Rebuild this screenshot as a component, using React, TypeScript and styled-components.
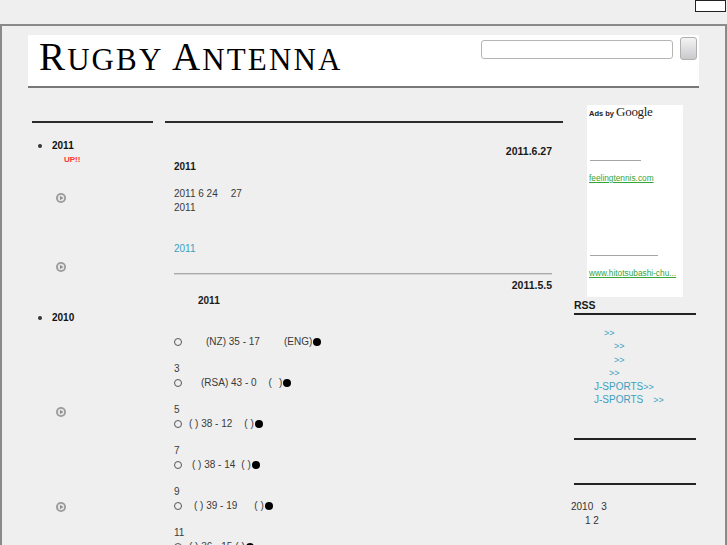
import React from 'react';
import styled, { createGlobalStyle } from 'styled-components';

const GlobalStyle = createGlobalStyle`
	html, body {
		margin: 0;
		padding: 0;
		background: #efefef;
		overflow: hidden;
	}
	body {
		font-family: "Liberation Sans", Arial, "Noto Sans CJK JP", sans-serif;
		font-size: 10px;
		color: #333;
	}
`;

const archive = [
	{ year: '2011', up: true, items: [28, 59] },
	{ year: '2010', up: false, items: [82, 85] },
];

const results = [
	{ no: '', pre: 24, home: '(NZ) 35 - 17', mid: 24, away: ['(ENG)'] },
	{ no: '3', pre: 19, home: '(RSA) 43 - 0', mid: 12, away: ['(', ')'], inner: 7 },
	{ no: '5', pre: 7, home: '( ) 38 - 12', mid: 12, away: ['( )'] },
	{ no: '7', pre: 10, home: '( ) 38 - 14', mid: 6, away: ['( )'] },
	{ no: '9', pre: 12, home: '( ) 39 - 19', mid: 17, away: ['( )'] },
	{ no: '11', pre: 7, home: '( ) 36 - 15', mid: 3, away: ['( )'] },
];

const rssLinks = [
	{ pad: 10, label: '' },
	{ pad: 20, label: '' },
	{ pad: 20, label: '' },
	{ pad: 15, label: '' },
	{ pad: 0, label: 'J-SPORTS' },
	{ pad: 0, label: 'J-SPORTS', tail: 10 },
];

export default function App(): JSX.Element {
	return (
		<>
			<GlobalStyle />
			<Page.TopStrip>
				<Page.CornerBox />
			</Page.TopStrip>
			<Page.Frame>
				<Header.Bar>
					<Header.Title>
						<Header.Cap>R</Header.Cap>UGBY <Header.Cap>A</Header.Cap>NTENNA
					</Header.Title>
					<Header.Search>
						<Header.Input />
						<Header.Button />
					</Header.Search>
				</Header.Bar>

				<Page.Columns>
					<Side.Column>
						<Side.Rule />
						<Side.List>
							{archive.map((a) => (
								<Side.Year key={a.year}>
									<Side.YearLabel>{a.year}</Side.YearLabel>
									{a.up && <Side.Up>UP!!</Side.Up>}
									{a.items.map((gap, i) => (
										<Side.Item key={i} gap={gap}>
											<PlayIcon />
										</Side.Item>
									))}
								</Side.Year>
							))}
						</Side.List>
					</Side.Column>

					<Main.Column>
						<Side.Rule />
						<Main.Entry>
							<Main.Date>2011.6.27</Main.Date>
							<Main.Title>2011</Main.Title>
							<Main.Para>
								2011 6 24<Gap w={13} />27
								<br />
								2011
							</Main.Para>
							<Main.Para>
								<br />
								<Main.Link>2011</Main.Link>
							</Main.Para>
						</Main.Entry>
						<Main.Divider />
						<Main.Entry>
							<Main.Date tight>2011.5.5</Main.Date>
							<Main.Title>
								<Gap w={24} />
								2011
							</Main.Title>
							{results.map((r, i) => (
								<Main.Para key={i}>
									{r.no || '\u00a0'}
									<br />
									<Main.Ring />
									<Gap w={r.pre} />
									{r.home}
									<Gap w={r.mid} />
									{r.away[0]}
									{r.away[1] && (
										<>
											<Gap w={r.inner ?? 0} />
											{r.away[1]}
										</>
									)}
									<Main.Dot />
								</Main.Para>
							))}
						</Main.Entry>
					</Main.Column>

					<Right.Column>
						<Right.Ad>
							<Right.AdHead>
								Ads by <Right.Google>Google</Right.Google>
							</Right.AdHead>
							<Right.AdRule w={51} gap={40} />
							<Right.AdLink>feelingtennis.com</Right.AdLink>
							<Right.AdRule w={68} gap={72} />
							<Right.AdLink>www.hitotsubashi-chu...</Right.AdLink>
						</Right.Ad>
						<Right.Heading>RSS</Right.Heading>
						<Right.Rule />
						<Right.Links>
							{rssLinks.map((l, i) => (
								<Right.LinkRow key={i}>
									<Gap w={l.pad} />
									{l.label}
									{l.tail && <Gap w={l.tail} />}
									<Right.Arrow>&gt;&gt;</Right.Arrow>
								</Right.LinkRow>
							))}
						</Right.Links>
						<Right.Rule gap={32} />
						<Right.Rule gap={43} />
						<Right.Note>
							2010<Gap w={8} />3
							<br />
							<Gap w={14} />1 2
						</Right.Note>
					</Right.Column>
				</Page.Columns>
			</Page.Frame>
		</>
	);
}

function PlayIcon(): JSX.Element {
	return (
		<svg width="10" height="10" viewBox="0 0 10 10">
			<circle cx="5" cy="5" r="5" fill="#9a9a9a" />
			<circle cx="5" cy="5" r="3.2" fill="#e4e4e4" />
			<path d="M4 3 L7.2 5 L4 7 Z" fill="#8a8a8a" />
		</svg>
	);
}

const Gap = styled.span<{ w: number }>`
	display: inline-block;
	width: ${(p) => p.w}px;
	height: 1px;
`;

namespace Page {
	export const TopStrip = styled.div`
		display: flex;
		justify-content: flex-end;
		align-items: flex-start;
		height: 24px;
	`;

	export const CornerBox = styled.div`
		width: 29px;
		height: 10px;
		background: #fff;
		border: 1px solid #222;
		margin-right: 1px;
	`;

	export const Frame = styled.div`
		box-sizing: border-box;
		height: 521px;
		border-top: 2px solid #8a8a8a;
		border-left: 2px solid #8a8a8a;
		border-right: 2px solid #8a8a8a;
		padding: 9px 0 0 26px;
		overflow: hidden;
	`;

	export const Columns = styled.div`
		display: flex;
		align-items: flex-start;
		margin-top: 17px;
	`;
}

namespace Header {
	export const Bar = styled.header`
		display: flex;
		justify-content: space-between;
		align-items: flex-start;
		box-sizing: border-box;
		width: 671px;
		height: 53px;
		padding: 0 2px 0 11px;
		background: #fff;
		border-bottom: 2px solid #777;
	`;

	export const Title = styled.h1`
		margin: 5px 0 0;
		font-family: "Liberation Serif", "Times New Roman", serif;
		font-weight: normal;
		font-size: 31px;
		line-height: 34px;
		letter-spacing: 2.1px;
		color: #000;
		white-space: nowrap;
	`;

	export const Cap = styled.span`
		font-size: 39px;
	`;

	export const Search = styled.div`
		display: flex;
		align-items: flex-start;
		gap: 7px;
		margin-top: 2px;
	`;

	export const Input = styled.div`
		box-sizing: border-box;
		width: 192px;
		height: 19px;
		margin-top: 3px;
		border: 1px solid #b5b5b5;
		border-radius: 3px;
		background: #fff;
	`;

	export const Button = styled.div`
		box-sizing: border-box;
		width: 17px;
		height: 23px;
		border: 1px solid #b0b0b0;
		border-radius: 3px;
		background: linear-gradient(#f4f4f4, #c9c9cc);
	`;
}

namespace Side {
	export const Column = styled.aside`
		width: 121px;
		margin: 16px 0 0 4px;
	`;

	export const Rule = styled.div`
		height: 2px;
		background: #2b2b2b;
	`;

	export const List = styled.ul`
		margin: 15px 0 0;
		padding: 0 0 0 20px;
		list-style: disc;
		font-size: 10px;
		line-height: 14px;
	`;

	export const Year = styled.li`
		margin-bottom: 38px;
		&::marker {
			font-size: 12px;
		}
	`;

	export const YearLabel = styled.div`
		font-weight: bold;
		color: #111;
	`;

	export const Up = styled.div`
		margin: 2px 0 0 12px;
		font-size: 8px;
		line-height: 10px;
		font-weight: bold;
		color: #f33;
	`;

	export const Item = styled.div<{ gap: number }>`
		display: flex;
		height: 10px;
		align-items: center;
		margin: ${(p) => p.gap}px 0 0 4px;
		svg {
			display: block;
		}
	`;
}

namespace Main {
	export const Column = styled.main`
		width: 398px;
		margin: 16px 0 0 12px;
	`;

	export const Entry = styled.section`
		padding: 0 11px 0 9px;
		font-size: 10px;
		line-height: 14px;
	`;

	export const Date = styled.div<{ tight?: boolean }>`
		margin-top: ${(p) => (p.tight ? 3 : 21)}px;
		text-align: right;
		font-size: 10.5px;
		font-weight: bold;
		color: #1a1a1a;
	`;

	export const Title = styled.h2`
		margin: 2px 0 0;
		font-size: 10px;
		font-weight: bold;
		color: #1a1a1a;
	`;

	export const Para = styled.p`
		margin: 13px 0 0;
		min-height: 14px;
		color: #3a3a3a;
		white-space: nowrap;
	`;

	export const Link = styled.span`
		color: #3c9fbf;
	`;

	export const Divider = styled.div`
		height: 1px;
		margin: 17px 11px 0 9px;
		background: #a8a8a8;
		border-bottom: 1px solid #d4d4d4;
	`;

	export const Ring = styled.span`
		display: inline-block;
		box-sizing: border-box;
		width: 8px;
		height: 8px;
		border: 1px solid #555;
		border-radius: 50%;
		vertical-align: -1px;
	`;

	export const Dot = styled.span`
		display: inline-block;
		width: 8px;
		height: 8px;
		margin-left: 1px;
		border-radius: 50%;
		background: #000;
		vertical-align: -1px;
	`;
}

namespace Right {
	export const Column = styled.aside`
		width: 122px;
		margin-left: 11px;
		font-size: 10px;
		line-height: 13.4px;
	`;

	export const Ad = styled.div`
		box-sizing: border-box;
		width: 96px;
		height: 192px;
		margin-left: 13px;
		padding: 1px 0 0 2px;
		background: #fff;
	`;

	export const AdHead = styled.div`
		font-size: 7.5px;
		line-height: 12px;
		font-weight: bold;
		color: #222;
		white-space: nowrap;
	`;

	export const Google = styled.span`
		font-family: "Liberation Serif", "Times New Roman", serif;
		font-size: 13px;
		font-weight: normal;
		letter-spacing: -0.3px;
	`;

	export const AdRule = styled.div<{ w: number; gap: number }>`
		width: ${(p) => p.w}px;
		height: 1px;
		margin: ${(p) => p.gap}px 0 0 1px;
		background: #a5a5a5;
	`;

	export const AdLink = styled.div`
		margin-top: 12px;
		font-size: 8.3px;
		line-height: 10px;
		color: #36a436;
		text-decoration: underline;
		white-space: nowrap;
	`;

	export const Heading = styled.h3`
		margin: 1px 0 0;
		font-size: 10.5px;
		line-height: 14px;
		font-weight: bold;
		color: #1a1a1a;
	`;

	export const Rule = styled.div<{ gap?: number }>`
		height: 2px;
		margin-top: ${(p) => p.gap ?? 1}px;
		background: #222;
	`;

	export const Links = styled.div`
		margin-top: 11px;
		padding-left: 20px;
		color: #3c9fbf;
	`;

	export const LinkRow = styled.div`
		height: 13.4px;
		white-space: nowrap;
	`;

	export const Arrow = styled.span`
		font-size: 9px;
	`;

	export const Note = styled.div`
		margin: 15px 0 0 -3px;
		color: #333;
	`;
}
